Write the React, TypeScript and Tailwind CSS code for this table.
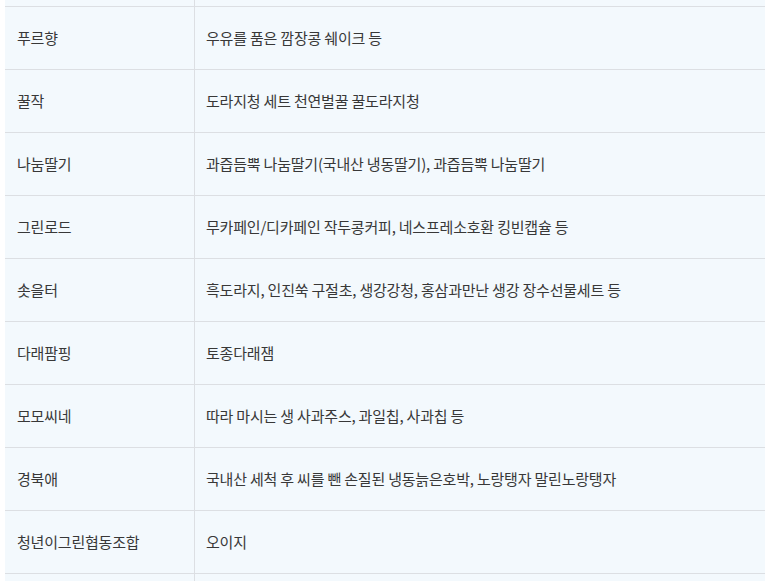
import React from 'react';

const rows: [string, string][] = [
  ['푸르향', '우유를 품은 깜장콩 쉐이크 등'],
  ['꿀작', '도라지청 세트 천연벌꿀 꿀도라지청'],
  ['나눔딸기', '과즙듬뿍 나눔딸기(국내산 냉동딸기), 과즙듬뿍 나눔딸기'],
  ['그린로드', '무카페인/디카페인 작두콩커피, 네스프레소호환 킹빈캡슐 등'],
  ['솟을터', '흑도라지, 인진쑥 구절초, 생강강청, 홍삼과만난 생강 장수선물세트 등'],
  ['다래팜핑', '토종다래잼'],
  ['모모씨네', '따라 마시는 생 사과주스, 과일칩, 사과칩 등'],
  ['경북애', '국내산 세척 후 씨를 뺀 손질된 냉동늙은호박, 노랑탱자 말린노랑탱자'],
  ['청년이그린협동조합', '오이지'],
];

export default function App() {
  return (
    <div className="h-[581px] w-[770px] overflow-hidden bg-white pl-[5px] font-['Malgun_Gothic','Noto_Sans_CJK_KR',sans-serif] text-[15px] tracking-[-0.2px] text-[#383838]">
      <div className="flex w-[760px] flex-col bg-[#f3f9fd]">
        {/* tail of the row above */}
        <div className="flex h-[7px] border-b border-[#dcdfe3]">
          <div className="w-[190px] border-r border-[#dcdfe3]" />
          <div className="flex-1" />
        </div>
        {rows.map(([name, items]) => (
          <div key={name} className="flex h-[63px] border-b border-[#dcdfe3]">
            <div className="flex w-[190px] items-center border-r border-[#dcdfe3] pl-[12px]">{name}</div>
            <div className="flex flex-1 items-center pl-[11px]">{items}</div>
          </div>
        ))}
        <div className="flex h-[20px]">
          <div className="w-[190px] border-r border-[#dcdfe3]" />
          <div className="flex-1" />
        </div>
      </div>
    </div>
  );
}
